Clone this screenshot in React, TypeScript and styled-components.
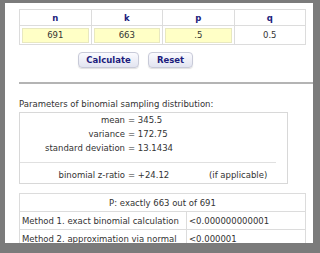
import React from 'react';
import styled, { createGlobalStyle } from 'styled-components';

const GlobalStyle = createGlobalStyle`
  html, body {
    margin: 0;
    padding: 0;
    background: #7b7b7b;
  }
  body {
    font-family: "DejaVu Sans", Verdana, sans-serif;
    font-size: 8.5px;
    color: #333;
  }
`;

const Frame = styled.div`
  margin: 3px 0 0 5px;
  width: 308px;
  height: 240px;
  background: white;
  overflow: hidden;
  box-sizing: border-box;
  padding: 6px 0 0 14px;
`;

const InputTable = styled.table`
  width: 287px;
  border-collapse: collapse;
  table-layout: fixed;
`;

const HeadCell = styled.th`
  height: 15px;
  padding: 0;
  border: 1px solid #dcdcdc;
  color: #1c1c7c;
  font-weight: bold;
  font-size: 8.5px;
  text-align: center;
`;

const ValueCell = styled.td`
  height: 18px;
  padding: 0 2px;
  border: 1px solid #dcdcdc;
  text-align: center;
  color: #333;
`;

const Field = styled.div<{ $plain?: boolean }>`
  height: 13px;
  line-height: 13px;
  background: ${(p) => (p.$plain ? 'transparent' : '#ffffc6')};
  border: 1px solid ${(p) => (p.$plain ? 'transparent' : '#e8e8c0')};
  text-align: center;
`;

const Buttons = styled.div`
  display: flex;
  gap: 9px;
  margin: 7px 0 0 59px;
`;

const Button = styled.button<{ $w: number }>`
  width: ${(p) => p.$w}px;
  height: 16px;
  padding: 0;
  font-family: "DejaVu Sans", Verdana, sans-serif;
  font-size: 8.5px;
  font-weight: bold;
  color: #1c1c7c;
  background: linear-gradient(#fbfbff, #e2e4f0);
  border: 1px solid #c8cad8;
  border-radius: 4px;
  box-shadow: 0 1px 1px rgba(0, 0, 0, 0.12);
`;

const Rule = styled.div`
  margin-top: 14px;
  height: 2px;
  background: #b4b4b4;
`;

const Heading = styled.div`
  margin-top: 15px;
  line-height: 10px;
  color: #333;
`;

const ParamBox = styled.div`
  margin-top: 3px;
  width: 269px;
  height: 72px;
  box-sizing: border-box;
  border: 1px solid #d8d8d8;
`;

const ParamRow = styled.div`
  display: grid;
  grid-template-columns: 108px 81px auto;
  height: 14px;
  line-height: 14px;
`;

const Label = styled.span`
  text-align: right;
  padding-right: 3px;
  white-space: nowrap;
`;

const Note = styled.span`
  white-space: nowrap;
`;

const Divider = styled.div`
  margin: 7px 11px 5px 0;
  border-top: 1px solid #e0e0e0;
`;

const ResultTable = styled.table`
  margin-top: 9px;
  width: 287px;
  border-collapse: collapse;
  table-layout: fixed;
`;

const ResultCell = styled.td<{ $center?: boolean }>`
  height: 17px;
  padding: 0 2px;
  border: 1px solid #dcdcdc;
  text-align: ${(p) => (p.$center ? 'center' : 'left')};
  white-space: nowrap;
  overflow: hidden;
  color: #333;
`;

const params = [
  { label: 'mean', value: '345.5' },
  { label: 'variance', value: '172.75' },
  { label: 'standard deviation', value: '13.1434' },
];

export default function App() {
  return (
    <>
      <GlobalStyle />
      <Frame>
        <InputTable>
          <thead>
            <tr>
              <HeadCell>n</HeadCell>
              <HeadCell>k</HeadCell>
              <HeadCell>p</HeadCell>
              <HeadCell>q</HeadCell>
            </tr>
          </thead>
          <tbody>
            <tr>
              <ValueCell><Field>691</Field></ValueCell>
              <ValueCell><Field>663</Field></ValueCell>
              <ValueCell><Field>.5</Field></ValueCell>
              <ValueCell><Field $plain>0.5</Field></ValueCell>
            </tr>
          </tbody>
        </InputTable>
        <Buttons>
          <Button $w={61}>Calculate</Button>
          <Button $w={45}>Reset</Button>
        </Buttons>
        <Rule />
        <Heading>Parameters of binomial sampling distribution:</Heading>
        <ParamBox>
          {params.map((p) => (
            <ParamRow key={p.label}>
              <Label>{p.label}</Label>
              <span>= {p.value}</span>
              <span />
            </ParamRow>
          ))}
          <Divider />
          <ParamRow>
            <Label>binomial z-ratio</Label>
            <span>= +24.12</span>
            <Note>(if applicable)</Note>
          </ParamRow>
        </ParamBox>
        <ResultTable>
          <colgroup>
            <col style={{ width: 167 }} />
            <col />
          </colgroup>
          <tbody>
            <tr>
              <ResultCell $center colSpan={2}>P: exactly 663 out of 691</ResultCell>
            </tr>
            <tr>
              <ResultCell>Method 1. exact binomial calculation</ResultCell>
              <ResultCell>&lt;0.000000000001</ResultCell>
            </tr>
            <tr>
              <ResultCell>Method 2. approximation via normal</ResultCell>
              <ResultCell>&lt;0.000001</ResultCell>
            </tr>
          </tbody>
        </ResultTable>
      </Frame>
    </>
  );
}
